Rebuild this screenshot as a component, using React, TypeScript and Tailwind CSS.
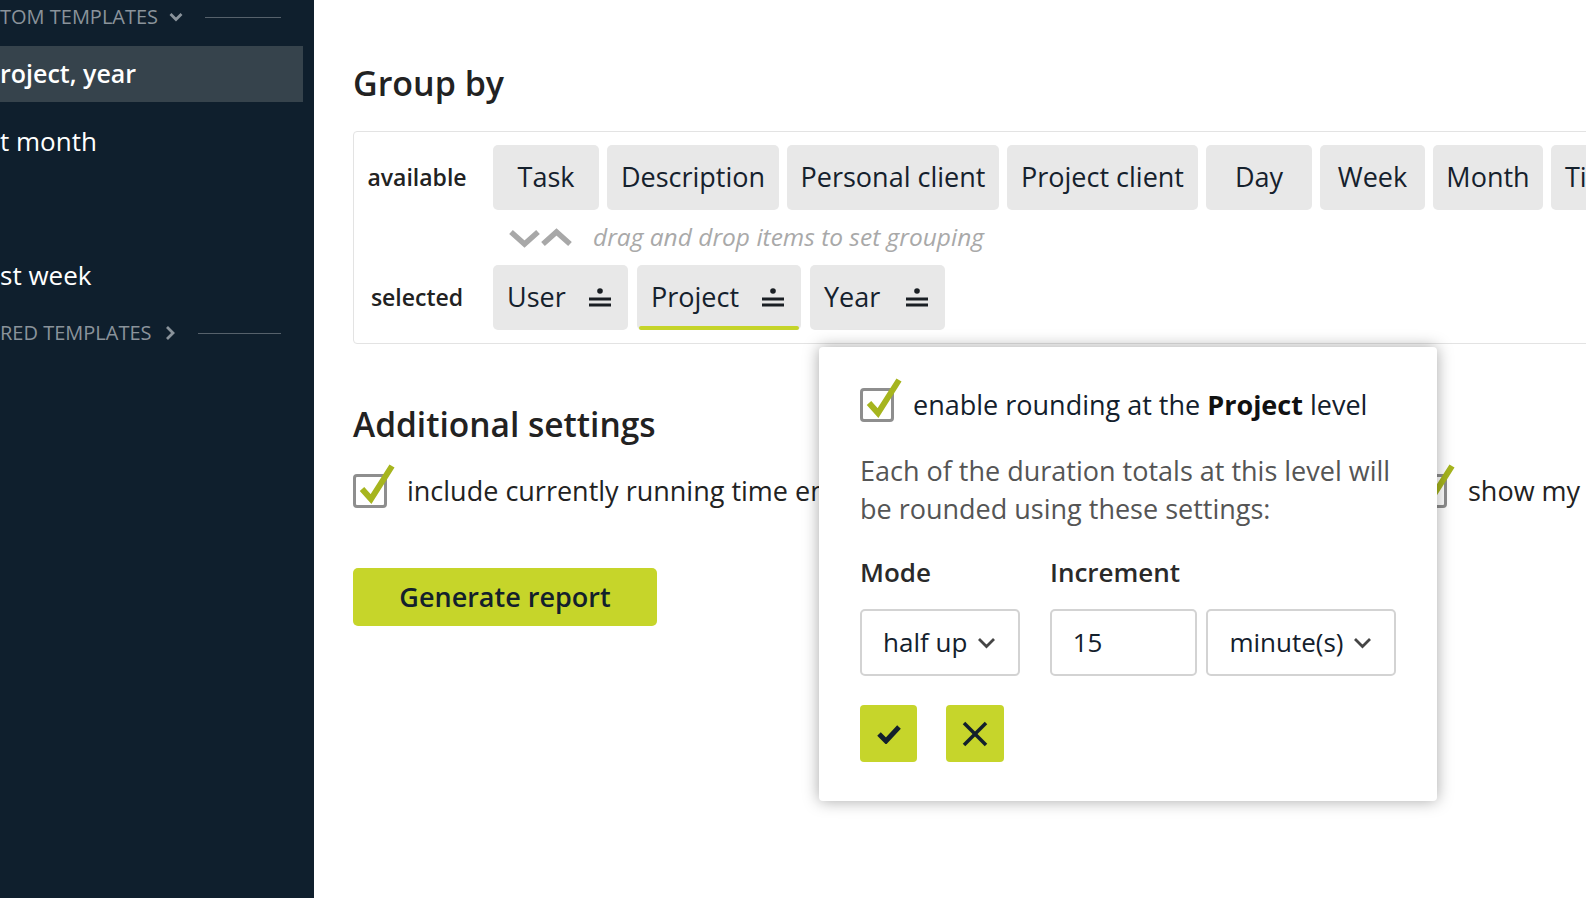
import React from 'react'

const available = [
  { label: 'Task', w: 'w-[106px]' },
  { label: 'Description', w: 'w-[172px]' },
  { label: 'Personal client', w: 'w-[212px]' },
  { label: 'Project client', w: 'w-[191px]' },
  { label: 'Day', w: 'w-[106px]' },
  { label: 'Week', w: 'w-[105px]' },
  { label: 'Month', w: 'w-[110px]' },
  { label: 'Time entry', w: 'px-[14px]' },
]

const selected = [
  { label: 'User', w: 'w-[135px]', active: false },
  { label: 'Project', w: 'w-[164px]', active: true },
  { label: 'Year', w: 'w-[135px]', active: false },
]

function SortIcon() {
  return (
    <svg width="22" height="19" viewBox="0 0 22 19" className="shrink-0">
      <circle cx="11" cy="3" r="2.8" fill="#1a1f24" />
      <rect x="0" y="9.5" width="22" height="3" fill="#1a1f24" />
      <rect x="0" y="15.5" width="22" height="3" fill="#1a1f24" />
    </svg>
  )
}

function SmallChevron({ right = false }: { right?: boolean }) {
  if (right) {
    return (
      <svg width="10" height="16" viewBox="0 0 10 16" className="shrink-0">
        <polyline points="2,2 8,8 2,14" fill="none" stroke="#8a939b" strokeWidth="2.8" />
      </svg>
    )
  }
  return (
    <svg width="14" height="10" viewBox="0 0 14 10" className="shrink-0">
      <polyline points="1.5,2 7,7.5 12.5,2" fill="none" stroke="#8a939b" strokeWidth="2.8" />
    </svg>
  )
}

function SelectChevron() {
  return (
    <svg width="19" height="12" viewBox="0 0 19 12" className="shrink-0">
      <polyline points="2,2 9.5,9.5 17,2" fill="none" stroke="#454545" strokeWidth="2.8" />
    </svg>
  )
}

function Checkbox() {
  return (
    <div className="relative h-[34px] w-[34px] shrink-0 rounded-[4px] border-[3px] border-[#8e8e8e] bg-white">
      <svg width="34" height="34" viewBox="0 0 34 34" className="absolute -left-[3px] -top-[3px] overflow-visible">
        <polyline points="9,15 18,25 39,-8" fill="none" stroke="#a6b51e" strokeWidth="6" />
      </svg>
    </div>
  )
}

function SectionHeader({ label, open }: { label: string; open?: boolean }) {
  return (
    <div className="flex h-[34px] items-center pr-[33px]">
      <span className="text-[20px] leading-none text-[#8a939b]">{label}</span>
      <span className={open ? 'ml-[11px]' : 'ml-[13px]'}>
        <SmallChevron right={!open} />
      </span>
      <div className={`${open ? 'ml-[22px]' : 'ml-[23px]'} h-px flex-1 bg-[#56616b]`} />
    </div>
  )
}

function Sidebar() {
  return (
    <aside className="w-[314px] shrink-0 bg-[#0f1f2d] text-white">
      <SectionHeader label="TOM TEMPLATES" open />
      <div className="mt-[12px] flex flex-col gap-[11px]">
        <div className="mr-[11px] flex h-[56px] items-center bg-[#36434c] text-[25px] font-semibold">roject, year</div>
        <div className="flex h-[56px] items-center text-[26px]">t month</div>
        <div className="h-[56px]" />
        <div className="flex h-[56px] items-center text-[26px]">st week</div>
      </div>
      <div className="mt-[13px]">
        <SectionHeader label="RED TEMPLATES" />
      </div>
    </aside>
  )
}

function RoundingPopover() {
  return (
    <div className="absolute left-[505px] top-[347px] h-[454px] w-[618px] rounded-[4px] bg-white px-[41px] pt-[38px] shadow-[0_0_16px_rgba(0,0,0,0.35)]">
      <div className="flex h-[40px] items-center">
        <Checkbox />
        <span className="ml-[19px] text-[27px] text-[#13202c]">
          enable rounding at the <b className="font-bold text-[#111]">Project</b> level
        </span>
      </div>
      <p className="mt-[27px] text-[27px] leading-[38px] text-[#555]">
        Each of the duration totals at this level will be rounded using these settings:
      </p>
      <div className="mt-[26px] flex h-[36px] items-center text-[26px] font-semibold text-[#2a2a2a]">
        <span className="w-[190px]">Mode</span>
        <span>Increment</span>
      </div>
      <div className="mt-[19px] flex h-[67px] text-[26px] text-[#13202c]">
        <div className="flex w-[160px] items-center justify-between rounded-[5px] border-2 border-[#d3d3d3] pl-[21px] pr-[22px]">
          <span>half up</span>
          <SelectChevron />
        </div>
        <div className="ml-[30px] flex w-[148px] items-center rounded-[5px] border-2 border-[#d3d3d3] pl-[21px]">15</div>
        <div className="ml-[9px] flex w-[190px] items-center justify-between rounded-[5px] border-2 border-[#d3d3d3] pl-[21px] pr-[22px]">
          <span>minute(s)</span>
          <SelectChevron />
        </div>
      </div>
      <div className="mt-[29px] flex gap-[29px]">
        <button className="flex h-[57px] w-[57px] items-center justify-center rounded-[4px] bg-[#c6d52b]">
          <svg width="24" height="20" viewBox="0 0 24 20">
            <polyline points="2,10 9,17 22,3" fill="none" stroke="#13202c" strokeWidth="5" />
          </svg>
        </button>
        <button className="flex h-[57px] w-[58px] items-center justify-center rounded-[4px] bg-[#c6d52b]">
          <svg width="26" height="26" viewBox="0 0 26 26">
            <line x1="2" y1="2" x2="24" y2="24" stroke="#13202c" strokeWidth="3.6" />
            <line x1="24" y1="2" x2="2" y2="24" stroke="#13202c" strokeWidth="3.6" />
          </svg>
        </button>
      </div>
    </div>
  )
}

function Main() {
  return (
    <main className="relative min-w-0 flex-1 pl-[39px] pt-[63px]">
      <h2 className="text-[34px] font-semibold leading-[40px] text-[#222]">Group by</h2>

      <div className="mt-[28px] w-[1300px] rounded-[4px] border border-[#e3e3e3] p-[13px]">
        <div className="flex h-[65px] items-center">
          <div className="w-[100px] shrink-0 text-center text-[23px] font-semibold text-[#222]">available</div>
          <div className="ml-[26px] flex h-full shrink-0 gap-[8px]">
            {available.map((p) => (
              <div
                key={p.label}
                className={`${p.w} flex shrink-0 items-center justify-center whitespace-nowrap rounded-[5px] bg-[#e8e8e8] text-[27px] text-[#15212d]`}
              >
                {p.label}
              </div>
            ))}
          </div>
        </div>

        <div className="flex h-[55px] items-center pl-[142px]">
          <svg width="63" height="20" viewBox="0 0 63 20" className="shrink-0">
            <polyline points="2,4 15.5,16 29,4" fill="none" stroke="#a8a8a8" strokeWidth="5.5" />
            <polyline points="34,16 47.5,4 61,16" fill="none" stroke="#a8a8a8" strokeWidth="5.5" />
          </svg>
          <span className="ml-[21px] text-[24.5px] italic text-[#a9a9a9]">drag and drop items to set grouping</span>
        </div>

        <div className="flex h-[65px] items-center">
          <div className="w-[100px] shrink-0 text-center text-[23px] font-semibold text-[#222]">selected</div>
          <div className="ml-[26px] flex h-full gap-[9px]">
            {selected.map((p) => (
              <div
                key={p.label}
                className={`${p.w} relative flex shrink-0 items-center justify-between rounded-[5px] bg-[#e8e8e8] pl-[14px] pr-[17px] text-[27px] text-[#15212d]`}
              >
                <span>{p.label}</span>
                <SortIcon />
                {p.active && (
                  <span className="absolute bottom-0 left-[2px] right-[2px] h-[4px] rounded-full bg-[#c5d42a]" />
                )}
              </div>
            ))}
          </div>
        </div>
      </div>

      <h2 className="mt-[60px] text-[33.5px] font-semibold leading-[40px] text-[#222]">Additional settings</h2>

      <div className="mt-[27px] flex h-[40px] items-center text-[27px] text-[#222]">
        <div className="flex w-[1060px] shrink-0 items-center">
          <Checkbox />
          <span className="ml-[20px] whitespace-nowrap">include currently running time entries</span>
        </div>
        <div className="flex shrink-0 items-center">
          <Checkbox />
          <span className="ml-[21px] whitespace-nowrap">show my billable rates</span>
        </div>
      </div>

      <button className="mt-[57px] h-[58px] w-[304px] rounded-[5px] bg-[#c6d52a] text-[27px] font-semibold text-[#13202c]">
        Generate report
      </button>

      <RoundingPopover />
    </main>
  )
}

export default function App() {
  return (
    <div className="flex h-[898px] w-full overflow-hidden bg-white font-['Open_Sans',sans-serif]">
      <Sidebar />
      <Main />
    </div>
  )
}
